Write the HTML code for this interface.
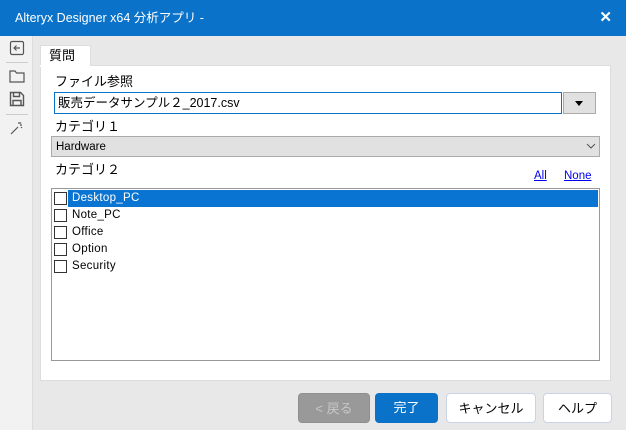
<!DOCTYPE html>
<html><head><meta charset="utf-8"><style>
*{box-sizing:border-box;margin:0;padding:0}
body{width:626px;height:430px;overflow:hidden;background:#e8e8e8;font-family:"Liberation Sans","Noto Sans CJK JP",sans-serif;font-size:12px;color:#000;position:relative}
.a{position:absolute}
.title{left:0;top:0;width:626px;height:36px;background:#0b72c9;color:#fff;font-size:12.5px;line-height:36px;padding-left:15px}
.x{right:14px;top:0;color:#fff;font-size:15px;font-weight:bold;line-height:36px}
.side{left:0;top:36px;width:33px;height:394px;background:#f2f2f2;border-right:1px solid #ddd}
.tab{left:40px;top:45px;width:51px;height:21px;background:#fff;border:1px solid #ddd;border-bottom:none;padding-left:8px;line-height:20px;font-size:13px}
.panel{left:40px;top:65px;width:571px;height:316px;background:#fff;border:1px solid #ddd}
.lbl{font-size:13px;line-height:18px}
.btn{top:393px;height:30px;border-radius:4px;text-align:center;line-height:29px;font-size:13px}
.cb{width:13px;height:13px;border:1px solid #333;background:#fff}
.it{left:72px;font-size:11.5px;letter-spacing:.3px;line-height:17px;height:17px}
</style></head><body>
<div class="a title">Alteryx Designer x64 分析アプリ -</div>
<div class="a x">✕</div>
<div class="a side"></div>
<svg class="a" style="left:9px;top:40px" width="16" height="16" viewBox="0 0 16 16" fill="none" stroke="#555" stroke-width="1.2"><rect x="1.5" y="1.5" width="13" height="13" rx="1.5"/><path d="M11 8H5M7.5 5.5 5 8l2.5 2.5"/></svg>
<div class="a" style="left:6px;top:62px;width:22px;height:1px;background:#ccc"></div>
<svg class="a" style="left:9px;top:69px" width="16" height="14" viewBox="0 0 16 14" fill="none" stroke="#555" stroke-width="1.2"><path d="M1 2h5l1.5 2H15v9H1z"/></svg>
<svg class="a" style="left:9px;top:91px" width="16" height="16" viewBox="0 0 16 16" fill="none" stroke="#555" stroke-width="1.4"><path d="M1.5 1.5h10l3 3v10h-13z"/><path d="M4.5 1.5v4h6v-4M4 14.5v-5h8v5"/></svg>
<div class="a" style="left:6px;top:114px;width:22px;height:1px;background:#ccc"></div>
<svg class="a" style="left:10px;top:121px" width="14" height="14" viewBox="0 0 14 14" fill="none" stroke="#555" stroke-width="1.2"><path d="M1 13 8 6M9 1v2M12 4h-2M11 1.5l-1 1M12 7l-1-1"/></svg>
<div class="a tab">質問</div>
<div class="a panel"></div>
<div class="a" style="left:40px;top:65px;width:50px;height:2px;background:#fff"></div>
<div class="a lbl" style="left:55px;top:73px">ファイル参照</div>
<div class="a" style="left:54px;top:92px;width:508px;height:22px;border:1px solid #0b72c9;background:#fff;padding-left:3px;line-height:20px;font-size:12.5px">販売データサンプル２_2017.csv</div>
<div class="a" style="left:563px;top:92px;width:33px;height:22px;border:1px solid #aaa;background:#e1e1e1"></div>
<div class="a" style="left:575px;top:101px;width:0;height:0;border-left:4px solid transparent;border-right:4px solid transparent;border-top:5px solid #000"></div>
<div class="a lbl" style="left:55px;top:118px">カテゴリ１</div>
<div class="a" style="left:51px;top:136px;width:549px;height:21px;border:1px solid #aaa;background:#e1e1e1;padding-left:4px;line-height:20px;font-size:11.5px">Hardware</div>
<svg class="a" style="left:586px;top:143px" width="10" height="7" viewBox="0 0 10 7" fill="none" stroke="#555"><path d="M1 1l4 4 4-4"/></svg>
<div class="a lbl" style="left:55px;top:161px">カテゴリ２</div>
<div class="a" style="left:534px;top:169px;color:#00e;text-decoration:underline;font-size:11.5px;line-height:14px">All</div>
<div class="a" style="left:564px;top:169px;color:#00e;text-decoration:underline;font-size:11.5px;line-height:14px">None</div>
<div class="a" style="left:51px;top:188px;width:549px;height:173px;border:1px solid #999;background:#fff"></div>
<div class="a" style="left:68px;top:190px;width:530px;height:17px;background:#0a74d2"></div>
<div class="a cb" style="left:54px;top:192px"></div><div class="a it" style="top:190px;color:#fff">Desktop_PC</div>
<div class="a cb" style="left:54px;top:209px"></div><div class="a it" style="top:207px">Note_PC</div>
<div class="a cb" style="left:54px;top:226px"></div><div class="a it" style="top:224px">Office</div>
<div class="a cb" style="left:54px;top:243px"></div><div class="a it" style="top:241px">Option</div>
<div class="a cb" style="left:54px;top:260px"></div><div class="a it" style="top:258px">Security</div>
<div class="a btn" style="left:298px;width:72px;background:#999;color:#c8c8c8;border:1px solid #8f8f8f">&lt; 戻る</div>
<div class="a btn" style="left:375px;width:63px;background:#0b72c9;color:#fff">完了</div>
<div class="a btn" style="left:446px;width:90px;background:#fff;border:1px solid #c8d4e6">キャンセル</div>
<div class="a btn" style="left:543px;width:69px;background:#fff;border:1px solid #c8d4e6">ヘルプ</div>
</body></html>
